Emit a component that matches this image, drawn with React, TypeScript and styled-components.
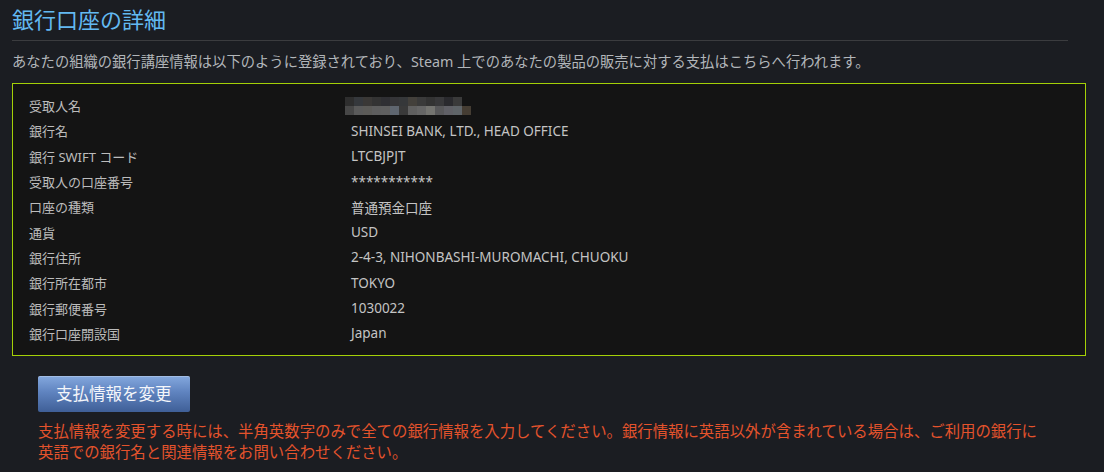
import React from 'react';
import styled, { createGlobalStyle } from 'styled-components';

const GlobalStyle = createGlobalStyle`
    body {
        margin: 0;
        background: #1b1d22;
        font-family: 'Noto Sans', 'Noto Sans CJK JP', sans-serif;
    }
`;

const Page = styled.div`
    width: 1074px;
    padding: 0 12px;
    min-height: 472px;
    box-sizing: content-box;
`;

const Title = styled.h2`
    margin: 0 18px 0 0;
    padding-top: 3px;
    height: 37px;
    font-size: 22px;
    font-weight: 400;
    line-height: 32px;
    color: #63b9f1;
    border-bottom: 1px solid #3b3c3f;
`;

const Intro = styled.p`
    margin: 0;
    padding: 10px 0 10px;
    font-size: 14.3px;
    line-height: 22px;
    color: #b2b6ba;
`;

const DetailsBox = styled.div`
    border: 1px solid #a4d007;
    background: #141414;
    padding: 9px 0 9px 16px;
    display: grid;
    grid-template-columns: 322px 1fr;
    grid-auto-rows: 25.3px;
    align-items: center;
`;

const Label = styled.div`
    font-size: 13px;
    color: #bcbcbc;
`;

const Value = styled.div`
    font-size: 13.5px;
    color: #c4c4c4;
`;

const Pixelated = styled.div`
    display: grid;
    grid-template-columns: repeat(14, 9px);
    grid-auto-rows: 9px;
    margin-left: -6px;
`;

const Cell = styled.span<{ $c: string }>`
    background: ${(p) => p.$c};
`;

const Actions = styled.div`
    padding: 20px 0 0 26px;
`;

const ChangeButton = styled.button`
    display: inline-block;
    height: 36px;
    padding: 0 18px;
    border: 0;
    border-radius: 2px;
    background: linear-gradient(to bottom, #84a8de 0%, #5f83bf 45%, #3f5f97 100%);
    box-shadow: inset 0 1px 0 rgba(255, 255, 255, 0.25);
    color: #f4f6fa;
    font-family: inherit;
    font-size: 16.5px;
    line-height: 36px;
    cursor: pointer;
`;

const Warning = styled.p`
    margin: 9px 0 0;
    font-size: 15.4px;
    line-height: 21.5px;
    color: #e4532c;
    width: 1004px;
`;

const blurTop = ['#2e2e2e', '#35383c', '#3a3836', '#333333', '#2f2f33', '#353538', '#36383a', '#43403b', '#3a3a3a', '#333333', '#38383a', '#2a2a2e', '#3a3a3a', 'transparent'];
const blurBottom = ['#474747', '#5a5a5a', '#5c5b58', '#5e5e5e', '#5f5f5f', '#5f6670', '#3a3a3a', '#606060', '#666666', '#747470', '#58585a', '#606066', '#5f6468', '#453d33'];

const rows: [string, React.ReactNode][] = [
    ['受取人名', null],
    ['銀行名', 'SHINSEI BANK, LTD., HEAD OFFICE'],
    ['銀行 SWIFT コード', 'LTCBJPJT'],
    ['受取人の口座番号', '***********'],
    ['口座の種類', '普通預金口座'],
    ['通貨', 'USD'],
    ['銀行住所', '2-4-3, NIHONBASHI-MUROMACHI, CHUOKU'],
    ['銀行所在都市', 'TOKYO'],
    ['銀行郵便番号', '1030022'],
    ['銀行口座開設国', 'Japan'],
];

export default function App() {
    return (
        <>
            <GlobalStyle />
            <Page>
                <Title>銀行口座の詳細</Title>
                <Intro>
                    あなたの組織の銀行講座情報は以下のように登録されており、Steam 上でのあなたの製品の販売に対する支払はこちらへ行われます。
                </Intro>
                <DetailsBox>
                    {rows.map(([label, value]) => (
                        <React.Fragment key={label}>
                            <Label>{label}</Label>
                            {value === null ? (
                                <Pixelated>
                                    {[...blurTop, ...blurBottom].map((c, i) => (
                                        <Cell key={i} $c={c} />
                                    ))}
                                </Pixelated>
                            ) : (
                                <Value>{value}</Value>
                            )}
                        </React.Fragment>
                    ))}
                </DetailsBox>
                <Actions>
                    <ChangeButton>支払情報を変更</ChangeButton>
                    <Warning>
                        支払情報を変更する時には、半角英数字のみで全ての銀行情報を入力してください。銀行情報に英語以外が含まれている場合は、ご利用の銀行に英語での銀行名と関連情報をお問い合わせください。
                    </Warning>
                </Actions>
            </Page>
        </>
    );
}
